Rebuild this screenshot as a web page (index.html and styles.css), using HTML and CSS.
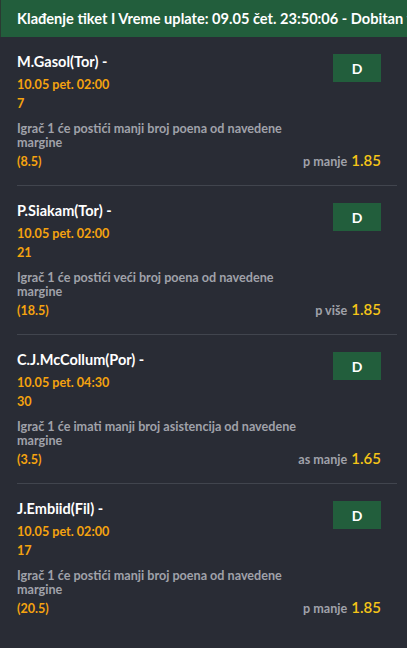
FILE: index.html
```html
<!DOCTYPE html>
<html lang="sr">
<head>
<meta charset="utf-8">
<link rel="stylesheet" href="styles.css">
</head>
<body>
<div class="header">Klađenje tiket I Vreme uplate: 09.05 čet. 23:50:06 - Dobitan tiket</div>
<div class="list">
  <div class="card">
    <div class="top">
      <div class="info">
        <div class="name">M.Gasol(Tor) -</div>
        <div class="date">10.05 pet. 02:00</div>
        <div class="num">7</div>
        <div class="desc">Igrač 1 će postići manji broj poena od navedene margine</div>
      </div>
      <div class="btn">D</div>
    </div>
    <div class="bottom">
      <span class="margin">(8.5)</span>
      <span class="odds"><span class="type">p manje</span> <span class="val">1.85</span></span>
    </div>
  </div>
  <div class="card">
    <div class="top">
      <div class="info">
        <div class="name">P.Siakam(Tor) -</div>
        <div class="date">10.05 pet. 02:00</div>
        <div class="num">21</div>
        <div class="desc">Igrač 1 će postići veći broj poena od navedene margine</div>
      </div>
      <div class="btn">D</div>
    </div>
    <div class="bottom">
      <span class="margin">(18.5)</span>
      <span class="odds"><span class="type">p više</span> <span class="val">1.85</span></span>
    </div>
  </div>
  <div class="card">
    <div class="top">
      <div class="info">
        <div class="name">C.J.McCollum(Por) -</div>
        <div class="date">10.05 pet. 04:30</div>
        <div class="num">30</div>
        <div class="desc">Igrač 1 će imati manji broj asistencija od navedene margine</div>
      </div>
      <div class="btn">D</div>
    </div>
    <div class="bottom">
      <span class="margin">(3.5)</span>
      <span class="odds"><span class="type">as manje</span> <span class="val">1.65</span></span>
    </div>
  </div>
  <div class="card last">
    <div class="top">
      <div class="info">
        <div class="name">J.Embiid(Fil) -</div>
        <div class="date">10.05 pet. 02:00</div>
        <div class="num">17</div>
        <div class="desc">Igrač 1 će postići manji broj poena od navedene margine</div>
      </div>
      <div class="btn">D</div>
    </div>
    <div class="bottom">
      <span class="margin">(20.5)</span>
      <span class="odds"><span class="type">p manje</span> <span class="val">1.85</span></span>
    </div>
  </div>
</div>
</body>
</html>
```
FILE: styles.css
```css
html, body {
  margin: 0;
  padding: 0;
  background: #292c35;
  font-family: Lato, "Liberation Sans", Arial, sans-serif;
  height: 100%;
}
.header {
  height: 37px;
  line-height: 37px;
  background: #225e3c;
  color: #ffffff;
  font-size: 14.6px;
  font-weight: 700;
  padding-left: 16px;
  border-left: 1px solid #2a3a32;
  white-space: nowrap;
  overflow: hidden;
}
.list {
  margin: 0 10px 0 17px;
}
.card {
  padding: 16px 16px 14px 0;
  border-bottom: 1px solid #41454e;
}
.card.last {
  border-bottom: none;
}
.top {
  display: flex;
  justify-content: space-between;
  align-items: flex-start;
}
.info {
  width: 300px;
}
.name {
  color: #ffffff;
  font-size: 14.5px;
  font-weight: 700;
  line-height: 18px;
}
.date {
  color: #f5a30f;
  font-size: 12.6px;
  font-weight: 700;
  line-height: 18px;
  margin-top: 5px;
}
.num {
  color: #f5a30f;
  font-size: 12.6px;
  font-weight: 700;
  line-height: 18px;
  margin-top: 1px;
}
.desc {
  color: #a0a2aa;
  font-size: 12.6px;
  font-weight: 700;
  line-height: 14px;
  margin-top: 9px;
}
.btn {
  width: 48px;
  height: 28px;
  margin-top: 1px;
  background: #225e3c;
  color: #ffffff;
  font-size: 14px;
  font-weight: 700;
  display: flex;
  align-items: center;
  justify-content: center;
}
.bottom {
  display: flex;
  justify-content: space-between;
  align-items: baseline;
  margin-top: 1px;
  line-height: 18px;
}
.margin {
  color: #f5a30f;
  font-size: 12.6px;
  font-weight: 700;
}
.type {
  color: #a0a2aa;
  font-size: 12.6px;
  font-weight: 700;
}
.val {
  color: #f5c518;
  font-size: 15px;
  font-weight: 600;
}
```
